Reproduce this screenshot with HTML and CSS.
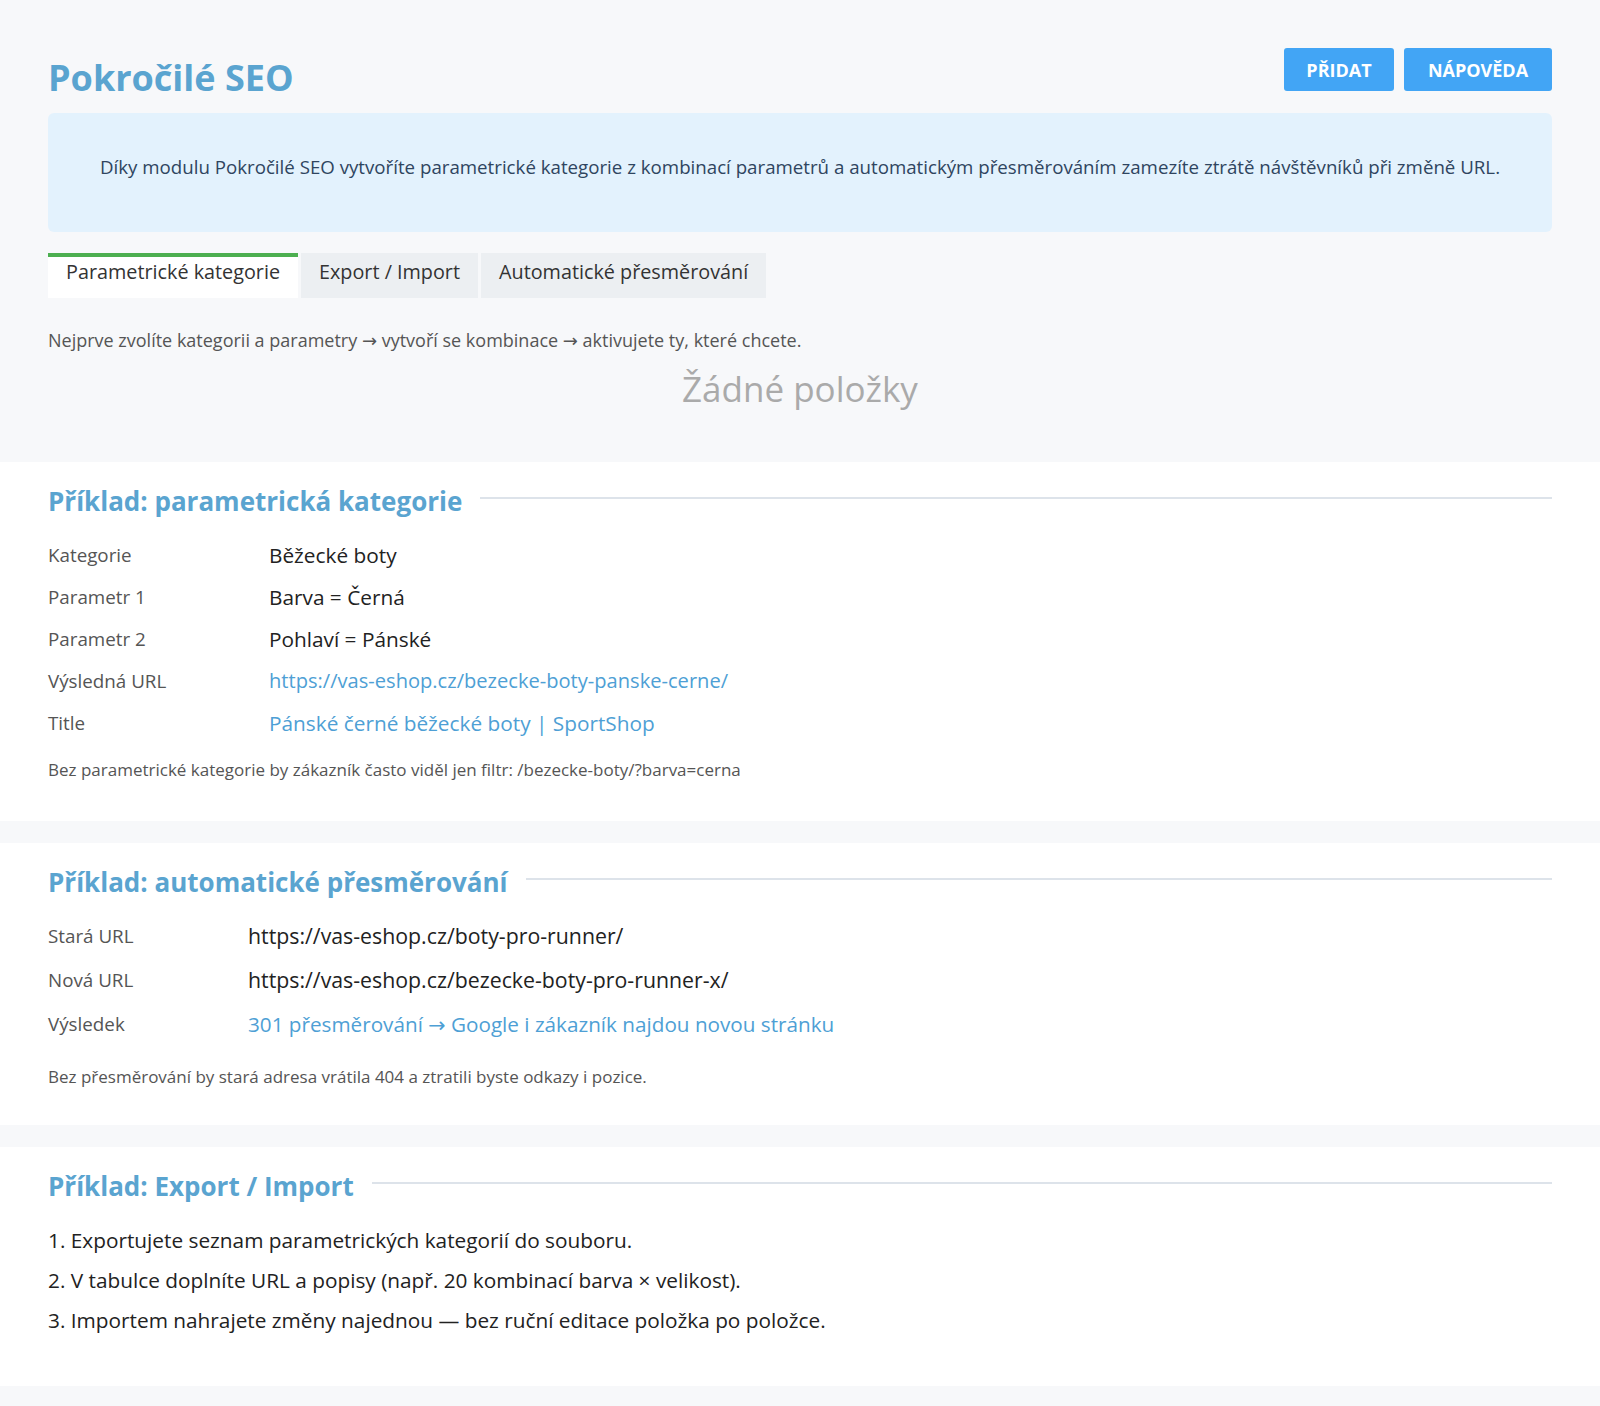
FILE: index.html
```html
<!DOCTYPE html>
<html lang="cs">
<head>
    <meta charset="UTF-8">
    <meta name="viewport" content="width=device-width, initial-scale=1.0">
    <title>Pokročilé SEO</title>
    <link rel="stylesheet" href="styles.css">
</head>
<body>
    <div class="top">
        <header class="page-head">
            <h1>Pokročilé SEO</h1>
            <div class="actions">
                <button class="btn btn-add">PŘIDAT</button>
                <button class="btn btn-help">NÁPOVĚDA</button>
            </div>
        </header>
        <div class="info">
            Díky modulu Pokročilé SEO vytvoříte parametrické kategorie z kombinací parametrů a automatickým přesměrováním zamezíte ztrátě návštěvníků při změně URL.
        </div>
        <div class="tabs">
            <div class="tab active">Parametrické kategorie</div>
            <div class="tab">Export / Import</div>
            <div class="tab">Automatické přesměrování</div>
        </div>
        <p class="hint">Nejprve zvolíte kategorii a parametry <span class="arrow">→</span> vytvoří se kombinace <span class="arrow">→</span> aktivujete ty, které chcete.</p>
        <div class="empty">Žádné položky</div>
    </div>

    <section class="example">
        <h2 class="example-title"><span>Příklad: parametrická kategorie</span></h2>
        <div class="rows">
            <div class="row"><div class="label">Kategorie</div><div class="value">Běžecké boty</div></div>
            <div class="row"><div class="label">Parametr 1</div><div class="value">Barva = Černá</div></div>
            <div class="row"><div class="label">Parametr 2</div><div class="value">Pohlaví = Pánské</div></div>
            <div class="row"><div class="label">Výsledná URL</div><div class="value link url">https://vas-eshop.cz/bezecke-boty-panske-cerne/</div></div>
            <div class="row"><div class="label">Title</div><div class="value link">Pánské černé běžecké boty | SportShop</div></div>
        </div>
        <p class="note">Bez parametrické kategorie by zákazník často viděl jen filtr: /bezecke-boty/?barva=cerna</p>
    </section>

    <section class="example example-redirect">
        <h2 class="example-title"><span>Příklad: automatické přesměrování</span></h2>
        <div class="rows">
            <div class="row"><div class="label">Stará URL</div><div class="value">https://vas-eshop.cz/boty-pro-runner/</div></div>
            <div class="row"><div class="label">Nová URL</div><div class="value">https://vas-eshop.cz/bezecke-boty-pro-runner-x/</div></div>
            <div class="row"><div class="label">Výsledek</div><div class="value link">301 přesměrování <span class="arrow">→</span> Google i zákazník najdou novou stránku</div></div>
        </div>
        <p class="note">Bez přesměrování by stará adresa vrátila 404 a ztratili byste odkazy i pozice.</p>
    </section>

    <section class="example example-list">
        <h2 class="example-title"><span>Příklad: Export / Import</span></h2>
        <ol class="steps">
            <li>1. Exportujete seznam parametrických kategorií do souboru.</li>
            <li>2. V tabulce doplníte URL a popisy (např. 20 kombinací barva × velikost).</li>
            <li>3. Importem nahrajete změny najednou — bez ruční editace položka po položce.</li>
        </ol>
    </section>
</body>
</html>
```

FILE: styles.css
```css
body {
    margin: 0;
    padding-bottom: 20px;
    background: #f7f8fa;
    font-family: "Open Sans", "Noto Sans", sans-serif;
    color: #222;
}
.top {
    padding: 48px 48px 0;
}
.page-head {
    display: flex;
    justify-content: space-between;
    align-items: flex-start;
    margin-bottom: 12px;
}
.page-head h1 {
    margin: 7px 0 0;
    font-size: 36px;
    line-height: 46px;
    font-weight: 700;
    color: #5aa4d0;
}
.actions {
    display: flex;
    gap: 10px;
}
.btn {
    height: 43px;
    padding: 0;
    border: none;
    border-radius: 3px;
    background: #42a5f5;
    color: #fff;
    font-family: "Open Sans", sans-serif;
    font-size: 18px;
    font-weight: 700;
    cursor: pointer;
}
.btn-add {
    width: 110px;
}
.btn-help {
    width: 148px;
}
.info {
    padding: 41px 40px 52px;
    background: #e3f2fd;
    border-radius: 6px;
    text-align: center;
    font-size: 18.7px;
    line-height: 26px;
    color: #2f4560;
}
.tabs {
    display: flex;
    gap: 3px;
    margin-top: 21px;
}
.tab {
    padding: 2px 18px 13px;
    border-top: 4px solid transparent;
    background: #eceff2;
    font-size: 19.8px;
    line-height: 26px;
    color: #333;
}
.tab.active {
    background: #fff;
    border-top-color: #4caf50;
}
.hint {
    margin: 29px 0 0;
    font-size: 18px;
    line-height: 26px;
    color: #555;
}
.arrow {
    font-family: "DejaVu Sans", sans-serif;
}
.empty {
    padding: 12px 0 50px;
    text-align: center;
    font-size: 35px;
    line-height: 46px;
    color: #aaa;
}
.example {
    margin-top: 22px;
    padding: 21px 48px 39px;
    background: #fff;
}
.example:first-of-type {
    margin-top: 0;
}
.example-title {
    display: flex;
    align-items: center;
    gap: 18px;
    margin: 0 0 15px;
    font-size: 26px;
    line-height: 36px;
    font-weight: 700;
    color: #5aa4d0;
}
.example-title::after {
    content: "";
    flex: 1;
    height: 2px;
    margin-top: -6px;
    background: #dde3ea;
}
.row {
    display: grid;
    grid-template-columns: 221px 1fr;
    padding: 6px 0;
    line-height: 30px;
}
.label {
    font-size: 18.8px;
    color: #555;
}
.value {
    font-size: 20.8px;
    color: #222;
}
.value.link {
    color: #4e9fd5;
}
.value.url {
    font-size: 20.1px;
}
.note {
    margin: 14px 0 0;
    font-size: 17px;
    line-height: 24px;
    color: #555;
}
.example-redirect {
    padding-bottom: 36px;
}
.example-redirect .example-title {
    margin-bottom: 14px;
}
.example-redirect .row {
    grid-template-columns: 200px 1fr;
    padding: 7px 0;
}
.example-redirect .value {
    font-size: 21.3px;
}
.example-redirect .value.link {
    font-size: 20.7px;
}
.example-redirect .note {
    margin-top: 18px;
}
.example-list {
    padding-bottom: 46px;
}
.example-list .example-title {
    margin-bottom: 16px;
}
.steps {
    margin: 0;
    padding: 0;
    list-style: none;
}
.steps li {
    padding: 5px 0;
    font-size: 20.8px;
    line-height: 30px;
    color: #222;
}
```
